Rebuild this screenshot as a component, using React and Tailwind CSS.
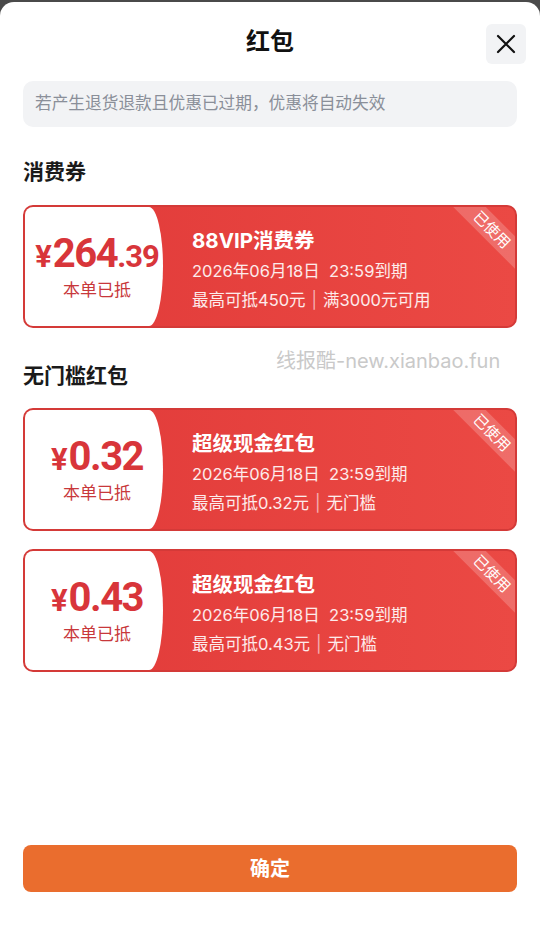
import React from "react";

const FONT = { fontFamily: '"Inter", "Noto Sans CJK SC", "Noto Sans", sans-serif' };

function Coupon({ intPart, decPart, decSmall, title, line3a, line3b }) {
  return (
    <div className="relative mx-[23px] flex h-[123px] overflow-hidden rounded-[10px] border-2 border-[#d43a38] bg-gradient-to-r from-[#e13a39] to-[#eb4944]">
      <div className="flex w-[138px] shrink-0 flex-col items-center justify-center rounded-tr-[14px_50%] rounded-br-[14px_50%] bg-white pl-[6px]">
        <div className="flex items-baseline text-[#d8353a] font-bold leading-none" style={{ fontFamily: '"Roboto", "Inter", sans-serif' }}>
          <span className="mr-[1px] text-[31px]">¥</span>
          <span className="text-[40px] tracking-[-1.5px]">{intPart}</span>
          <span className={decSmall ? "text-[31px] tracking-[-1px]" : "text-[40px] tracking-[-1.5px]"}>{decPart}</span>
        </div>
        <div className="mt-[8px] text-[17px] leading-none text-[#c8383b]">本单已抵</div>
      </div>
      <div className="flex flex-col pl-[29px] pt-[21px] text-white">
        <div className="text-[20.5px] font-bold leading-[26px]">{title}</div>
        <div className="mt-[5px] text-[16.5px] leading-[24px] text-white/90">2026年06月18日&nbsp; 23:59到期</div>
        <div className="mt-[5px] text-[16.5px] leading-[24px] text-white/90">
          {line3a}
          <span className="mx-[6px] text-white/60">|</span>
          {line3b}
        </div>
      </div>
      <div className="absolute right-[-27px] top-[11px] flex h-[23px] w-[100px] rotate-45 items-center justify-center bg-white/20 text-[15px] leading-none text-white">
        已使用
      </div>
    </div>
  );
}

export default function App() {
  return (
    <div className="min-h-[939px] w-[540px] bg-[#4a4a4a] pt-[2px]" style={FONT}>
      <div className="relative flex h-[937px] flex-col rounded-t-[14px] bg-white">
        <div className="relative flex h-[79px] items-center justify-center">
          <div className="text-[24px] font-bold text-[#111]">红包</div>
          <div className="absolute right-[14px] top-[22px] flex h-[40px] w-[40px] items-center justify-center rounded-[6px] bg-[#f2f3f5]">
            <svg width="22" height="22" viewBox="0 0 22 22" fill="none" stroke="#111" strokeWidth="2.2" strokeLinecap="round">
              <path d="M3 3 L19 19 M19 3 L3 19" />
            </svg>
          </div>
        </div>
        <div className="mx-[23px] flex h-[46px] items-center rounded-[10px] bg-[#f2f3f5] px-[12px] text-[16.7px] text-[#8a8f99]">
          若产生退货退款且优惠已过期，优惠将自动失效
        </div>
        <div className="mx-[23px] mt-[31px] text-[21px] font-semibold leading-[28px] text-[#1a1a1a]">消费券</div>
        <div className="mt-[19px]">
          <Coupon intPart="264" decPart=".39" decSmall title="88VIP消费券" line3a="最高可抵450元" line3b="满3000元可用" />
        </div>
        <div className="mx-[23px] mt-[34px] text-[21px] font-semibold leading-[28px] text-[#1a1a1a]">无门槛红包</div>
        <div className="mt-[18px] flex flex-col gap-[18px]">
          <Coupon intPart="0" decPart=".32" title="超级现金红包" line3a="最高可抵0.32元" line3b="无门槛" />
          <Coupon intPart="0" decPart=".43" title="超级现金红包" line3a="最高可抵0.43元" line3b="无门槛" />
        </div>
        <div className="flex-1" />
        <div className="mx-[23px] mb-[47px] flex h-[47px] items-center justify-center rounded-[8px] bg-[#ea6d2e] text-[20px] font-bold text-white">
          确定
        </div>
        <div className="pointer-events-none absolute left-[276px] top-[345px] text-[20px] leading-[28px] text-[#c9c9c9]">
          线报酷-new.xianbao.fun
        </div>
      </div>
    </div>
  );
}
